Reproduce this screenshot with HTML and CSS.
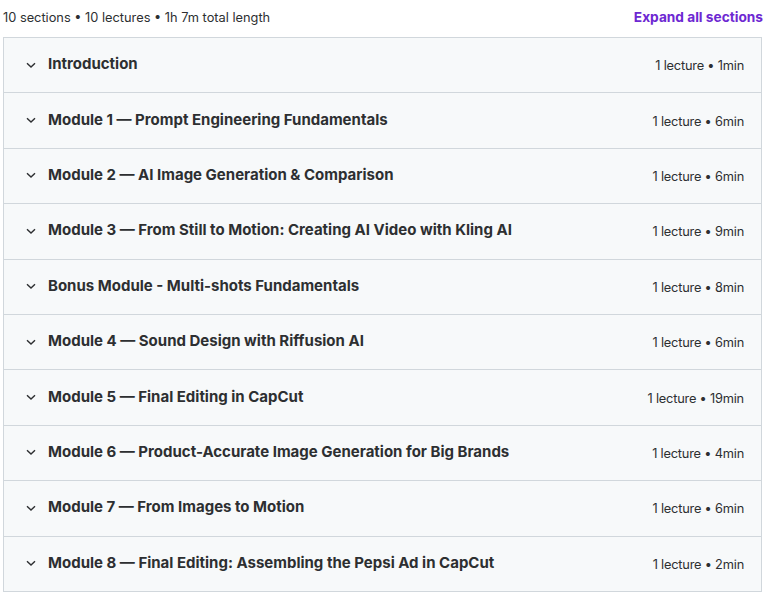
FILE: index.html
```html
<!DOCTYPE html>
<html>
<head>
<meta charset="utf-8">
<link rel="stylesheet" href="styles.css">
</head>
<body>
<div class="page">
  <div class="summary">
    <span class="stats">10 sections • 10 lectures • 1h 7m total length</span>
    <button class="expand">Expand all sections</button>
  </div>
  <div class="curriculum">
    <div class="section"><span class="chev"><svg viewBox="0 0 12 12" width="12" height="12"><path d="M2 4.2 6 8 10 4.2" fill="none" stroke="currentColor" stroke-width="1.4"/></svg></span><span class="title">Introduction</span><span class="meta">1 lecture • 1min</span></div>
    <div class="section"><span class="chev"><svg viewBox="0 0 12 12" width="12" height="12"><path d="M2 4.2 6 8 10 4.2" fill="none" stroke="currentColor" stroke-width="1.4"/></svg></span><span class="title">Module 1 — Prompt Engineering Fundamentals</span><span class="meta">1 lecture • 6min</span></div>
    <div class="section"><span class="chev"><svg viewBox="0 0 12 12" width="12" height="12"><path d="M2 4.2 6 8 10 4.2" fill="none" stroke="currentColor" stroke-width="1.4"/></svg></span><span class="title">Module 2 — AI Image Generation &amp; Comparison</span><span class="meta">1 lecture • 6min</span></div>
    <div class="section"><span class="chev"><svg viewBox="0 0 12 12" width="12" height="12"><path d="M2 4.2 6 8 10 4.2" fill="none" stroke="currentColor" stroke-width="1.4"/></svg></span><span class="title">Module 3 — From Still to Motion: Creating AI Video with Kling AI</span><span class="meta">1 lecture • 9min</span></div>
    <div class="section"><span class="chev"><svg viewBox="0 0 12 12" width="12" height="12"><path d="M2 4.2 6 8 10 4.2" fill="none" stroke="currentColor" stroke-width="1.4"/></svg></span><span class="title">Bonus Module - Multi-shots Fundamentals</span><span class="meta">1 lecture • 8min</span></div>
    <div class="section"><span class="chev"><svg viewBox="0 0 12 12" width="12" height="12"><path d="M2 4.2 6 8 10 4.2" fill="none" stroke="currentColor" stroke-width="1.4"/></svg></span><span class="title">Module 4 — Sound Design with Riffusion AI</span><span class="meta">1 lecture • 6min</span></div>
    <div class="section"><span class="chev"><svg viewBox="0 0 12 12" width="12" height="12"><path d="M2 4.2 6 8 10 4.2" fill="none" stroke="currentColor" stroke-width="1.4"/></svg></span><span class="title">Module 5 — Final Editing in CapCut</span><span class="meta">1 lecture • 19min</span></div>
    <div class="section"><span class="chev"><svg viewBox="0 0 12 12" width="12" height="12"><path d="M2 4.2 6 8 10 4.2" fill="none" stroke="currentColor" stroke-width="1.4"/></svg></span><span class="title">Module 6 — Product-Accurate Image Generation for Big Brands</span><span class="meta">1 lecture • 4min</span></div>
    <div class="section"><span class="chev"><svg viewBox="0 0 12 12" width="12" height="12"><path d="M2 4.2 6 8 10 4.2" fill="none" stroke="currentColor" stroke-width="1.4"/></svg></span><span class="title">Module 7 — From Images to Motion</span><span class="meta">1 lecture • 6min</span></div>
    <div class="section"><span class="chev"><svg viewBox="0 0 12 12" width="12" height="12"><path d="M2 4.2 6 8 10 4.2" fill="none" stroke="currentColor" stroke-width="1.4"/></svg></span><span class="title">Module 8 — Final Editing: Assembling the Pepsi Ad in CapCut</span><span class="meta">1 lecture • 2min</span></div>
  </div>
</div>
</body>
</html>
```

FILE: styles.css
```css
html, body {
  margin: 0;
  padding: 0;
  background: #ffffff;
}
body {
  font-family: Inter, "Noto Sans", "Liberation Sans", sans-serif;
  color: #2d2f31;
}
.page {
  width: 759px;
  padding: 0 3px;
}
.summary {
  display: flex;
  justify-content: space-between;
  align-items: center;
  height: 36px;
  padding-bottom: 1px;
}
.stats {
  font-size: 12.8px;
  color: #2d2f31;
  margin-top: -2px;
}
.expand {
  border: none;
  background: none;
  padding: 0;
  font-family: inherit;
  font-size: 13.7px;
  font-weight: 700;
  color: #6d28d2;
  margin-top: -2px;
  margin-right: -1px;
}
.curriculum {
  border: 1px solid #d1d7dc;
  border-bottom: none;
}
.section {
  display: flex;
  align-items: center;
  height: 54.4px;
  background: #f7f9fa;
  border-bottom: 1px solid #d1d7dc;
  padding: 0 17px 0 21px;
}
.chev {
  display: flex;
  width: 12px;
  height: 12px;
  color: #2d2f31;
  margin-right: 11px;
  margin-top: -1px;
}
.title {
  flex: 1;
  font-size: 15px;
  font-weight: 700;
  color: #2d2f31;
  margin-top: -3px;
}
.meta {
  font-size: 12.8px;
  letter-spacing: -0.2px;
  color: #2d2f31;
  margin-top: 1px;
}
```
